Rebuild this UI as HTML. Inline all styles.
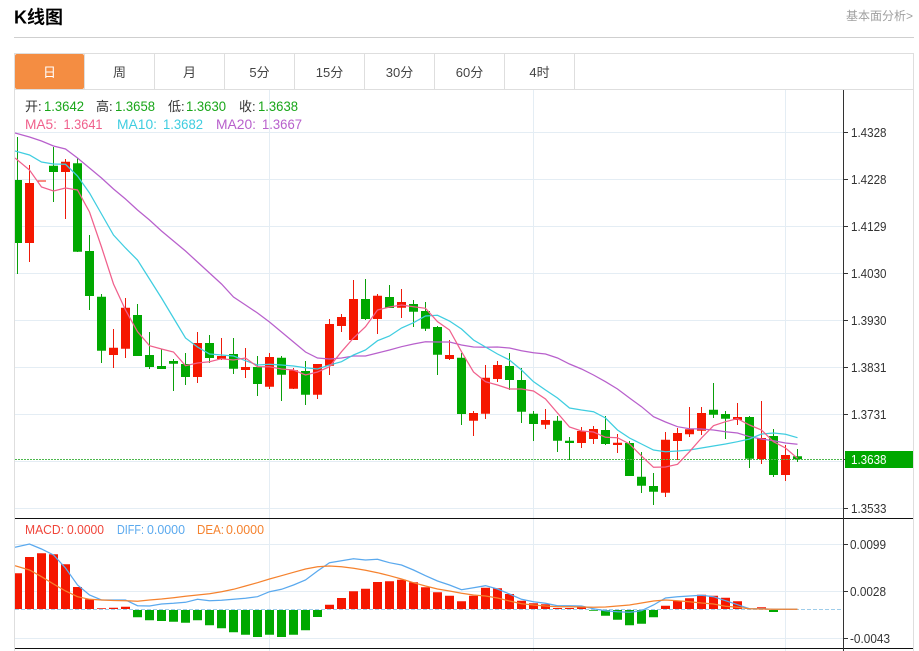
<!DOCTYPE html>
<html lang="zh">
<head>
<meta charset="utf-8">
<title>K线图</title>
<style>
html,body{margin:0;padding:0;background:#fff;width:919px;height:651px;overflow:hidden}
svg{display:block;position:absolute;left:0;top:0}
text{font-family:"Liberation Sans","Noto Sans CJK SC",sans-serif}
</style>
</head>
<body>
<svg width="919" height="651" viewBox="0 0 919 651" xmlns="http://www.w3.org/2000/svg">
<defs><clipPath id="c"><rect x="15" y="90" width="828" height="561"/></clipPath></defs>

<!-- header -->
<text x="14" y="23.5" font-size="18" font-weight="700" fill="#000">K线图</text>
<text x="846" y="20" font-size="12" fill="#a0a0a0">基本面分析&gt;</text>
<path d="M14 37.5H914" stroke="#cfcfcf" fill="none"/>

<!-- tabs / frame -->
<path d="M14.5 651V53.5H913.5V651M14.5 89.5H913.5M84.5 54V89M154.5 54V89M224.5 54V89M294.5 54V89M364.5 54V89M434.5 54V89M504.5 54V89M574.5 54V89" stroke="#dedede" fill="none"/>
<rect x="15" y="54" width="69" height="35" rx="2" fill="#f48d42"/>
<g font-size="13" fill="#444" text-anchor="middle">
<text x="49.5" y="77" fill="#fff">日</text>
<text x="119.5" y="77">周</text>
<text x="189.5" y="77">月</text>
<text x="259.5" y="77">5分</text>
<text x="329.5" y="77">15分</text>
<text x="399.5" y="77">30分</text>
<text x="469.5" y="77">60分</text>
<text x="539.5" y="77">4时</text>
</g>

<!-- grid -->
<path d="M15 132.5H843M15 179.5H843M15 226.5H843M15 273.5H843M15 320.5H843M15 367.5H843M15 414.5H843M15 461.5H843M15 508.5H843M15 544.5H843M15 591.5H843M15 638.5H843M269.5 90V651M533.5 90V651M785.5 90V651" stroke="#e4edf4" fill="none"/>

<g clip-path="url(#c)">
<!-- wicks -->
<path fill="none" stroke="#0a9f0a" d="M17.5 137V274M53.5 147V202M77.5 158V252M89.5 235V310M101.5 294V363M137.5 304V356M149.5 332V369M161.5 349V369M173.5 359V391M185.5 353V385M209.5 335V363M233.5 338V374M257.5 356V396M281.5 356V401M305.5 361V405M365.5 279V320M389.5 285V308M413.5 300V327M425.5 302V331M437.5 326V375M461.5 353V425M509.5 353V390M521.5 368V423M533.5 411V441M557.5 416V452M569.5 437V460M605.5 416V445M629.5 441V476M641.5 452V493M653.5 473V505M713.5 383V418M725.5 411V439M749.5 416V468M773.5 429V477M797.5 449V462"/>
<path fill="none" stroke="#ee1a0a" d="M29.5 165V262M65.5 159V219M113.5 329V368M125.5 298V358M197.5 332V383M221.5 338V360M245.5 348V378M269.5 353V389M293.5 368V389M317.5 364V399M329.5 319V375M341.5 314V332M353.5 280V340M377.5 294V334M401.5 289V318M449.5 340V360M473.5 411V436M485.5 365V419M497.5 361V382M545.5 409V429M581.5 427V448M593.5 426V444M617.5 434V453M665.5 432V497M677.5 428V460M689.5 407V437M701.5 407V435M737.5 403V425M761.5 401V464M785.5 445V481"/>
<!-- bodies -->
<path fill="#00a800" d="M13 180h9V243h-9zM49 165.7h9V172h-9zM73 163.3h9V251.7h-9zM85 251h9V296h-9zM97 296.7h9V350.7h-9zM133 315h9V356h-9zM145 355h9V367h-9zM157 366h9V369h-9zM169 361h9V363.7h-9zM181 364h9V377h-9zM205 343h9V358h-9zM229 354h9V368.7h-9zM253 367h9V384h-9zM277 357.7h9V374.7h-9zM301 371h9V394.7h-9zM361 299h9V319h-9zM385 297h9V308h-9zM409 304h9V311.7h-9zM421 311h9V328.7h-9zM433 327h9V354.7h-9zM457 357.7h9V414h-9zM505 366h9V380h-9zM517 380h9V411.7h-9zM529 413.7h9V424h-9zM553 420.7h9V440.7h-9zM565 440.7h9V443h-9zM601 430h9V444h-9zM625 443h9V476h-9zM637 476.7h9V485.7h-9zM649 486h9V491.7h-9zM709 409.7h9V414.7h-9zM721 414h9V418.7h-9zM745 417h9V458.7h-9zM769 436h9V475h-9zM793 456.3h9V459.3h-9z"/>
<path fill="#f51700" d="M25 183h9V243h-9zM37 180.5h9V181.5h-9zM61 161.7h9V172h-9zM109 347.7h9V355h-9zM121 307.7h9V348.7h-9zM193 343h9V377h-9zM217 356h9V359h-9zM241 367h9V370h-9zM265 357h9V386.7h-9zM289 370.3h9V388.7h-9zM313 364h9V394.7h-9zM325 324h9V365.7h-9zM337 317h9V326h-9zM349 299h9V340h-9zM373 295.7h9V319h-9zM397 302h9V307.7h-9zM445 355h9V359h-9zM469 413h9V420.7h-9zM481 377.7h9V413.7h-9zM493 365h9V379h-9zM541 420h9V424.7h-9zM577 431h9V443h-9zM589 429h9V439h-9zM613 442.7h9V445h-9zM661 439.7h9V492.7h-9zM673 433h9V441h-9zM685 429.3h9V434.3h-9zM697 413h9V430.7h-9zM733 417h9V420h-9zM757 438h9V459h-9zM781 455h9V475h-9z"/>

<!-- last-price dashed -->
<path d="M15 459.5H843" stroke="#4db84d" stroke-dasharray="2 1" fill="none"/>

<!-- MA20 -->
<polyline fill="none" stroke="#b860cc" stroke-width="1.25" points="15,133 29.5,137 41.5,141 53.5,146 65.5,149 77.5,158 89.5,168 101.5,178 113.5,189 125.5,199 137.5,210 149.5,220 161.5,231 173.5,241 185.5,251 197.5,262 209.5,273 221.5,284 233.5,297 245.5,305 257.5,313 269.5,322 281.5,332 293.5,342 305.5,352 317.5,358 329.5,359 341.5,358 353.5,356 365.5,356 377.5,353 389.5,350 401.5,346.7 413.5,344 425.5,341.7 437.5,342 449.5,342 461.5,345 473.5,347 485.5,347.3 497.5,347 509.5,348 521.5,350.7 533.5,352.7 545.5,354 557.5,358 569.5,364 581.5,369 593.5,375 605.5,381.7 617.5,389 629.5,398 641.5,406.7 653.5,416.7 665.5,422 677.5,426.7 689.5,428.7 701.5,429 713.5,430 725.5,431.7 737.5,433 749.5,436.7 761.5,439 773.5,440.7 785.5,443 797.5,444.3"/>
<!-- MA10 -->
<polyline fill="none" stroke="#3fcde0" stroke-width="1.25" points="15,151 29.5,155 41.5,162 53.5,164 65.5,164.3 77.5,176 89.5,193 101.5,214 113.5,235 125.5,248 137.5,260 149.5,279 161.5,298 173.5,318 185.5,338 197.5,347 209.5,354 221.5,355 233.5,356 245.5,360.7 257.5,365 269.5,364.3 281.5,365 293.5,366 305.5,367.7 317.5,369 329.5,365 341.5,361.7 353.5,355 365.5,350 377.5,340.7 389.5,336 401.5,328 413.5,322.7 425.5,316 437.5,315.3 449.5,321 461.5,329 473.5,340 485.5,347 497.5,354 509.5,360 521.5,370 533.5,381.7 545.5,390 557.5,398 569.5,408 581.5,410 593.5,411.7 605.5,418 617.5,430 629.5,438 641.5,444 653.5,450 665.5,451.7 677.5,451 689.5,450 701.5,448 713.5,446 725.5,444 737.5,441.7 749.5,439 761.5,434 773.5,433 785.5,434.3 797.5,437.7"/>
<!-- MA5 -->
<polyline fill="none" stroke="#f0608c" stroke-width="1.25" points="15,158 29.5,170 41.5,187 53.5,191 65.5,188 77.5,190 89.5,212 101.5,247 113.5,284 125.5,310 137.5,331.7 149.5,345.7 161.5,349 173.5,352 185.5,365.7 197.5,363 209.5,361.7 221.5,358.7 233.5,360 245.5,358 257.5,366.7 269.5,366.7 281.5,369 293.5,370 305.5,375 317.5,372 329.5,366.7 341.5,351.7 353.5,338 365.5,326.7 377.5,310 389.5,307 401.5,305 413.5,306.7 425.5,308.3 437.5,321.7 449.5,330 461.5,351.7 473.5,372 485.5,381.7 497.5,385 509.5,389 521.5,389 533.5,391 545.5,399 557.5,413 569.5,427 581.5,431 593.5,432 605.5,437.3 617.5,437.7 629.5,444 641.5,456 653.5,467.3 665.5,467 677.5,464.3 689.5,451.7 701.5,438 713.5,425.7 725.5,421.7 737.5,418.7 749.5,425 761.5,430 773.5,441.7 785.5,448 797.5,458.3"/>

<!-- MACD zero line -->
<path d="M15 609.5H841" stroke="#9fcdea" stroke-dasharray="4 2" fill="none"/>
<!-- MACD bars -->
<path fill="#f51700" d="M13 573.3h9V609h-9zM25 557h9V609h-9zM37 553.3h9V609h-9zM49 554.3h9V609h-9zM61 564.3h9V609h-9zM73 587h9V609h-9zM85 599.3h9V609h-9zM97 608.3h9V609h-9zM109 607.7h9V609h-9zM121 606.7h9V609h-9zM325 604.7h9V609h-9zM337 598h9V609h-9zM349 591.3h9V609h-9zM361 588.7h9V609h-9zM373 582h9V609h-9zM385 581.3h9V609h-9zM397 579.7h9V609h-9zM409 582.3h9V609h-9zM421 587.3h9V609h-9zM433 592.3h9V609h-9zM445 595.7h9V609h-9zM457 601.3h9V609h-9zM469 595.7h9V609h-9zM481 587.7h9V609h-9zM493 588.3h9V609h-9zM505 594h9V609h-9zM517 600.7h9V609h-9zM529 603.3h9V609h-9zM541 604.3h9V609h-9zM553 608h9V609h-9zM565 608h9V609h-9zM577 607.3h9V609h-9zM661 605.7h9V609h-9zM673 601h9V609h-9zM685 598.3h9V609h-9zM697 594.7h9V609h-9zM709 595.7h9V609h-9zM721 597.7h9V609h-9zM733 601.3h9V609h-9zM745 608.7h9V609h-9zM757 607.3h9V609h-9z"/>
<path fill="#00a800" d="M133 610h9V617.3h-9zM145 610h9V620.3h-9zM157 610h9V621h-9zM169 610h9V621.7h-9zM181 610h9V622.7h-9zM193 610h9V620.3h-9zM205 610h9V625.3h-9zM217 610h9V628.3h-9zM229 610h9V632.3h-9zM241 610h9V634.7h-9zM253 610h9V637h-9zM265 610h9V634.7h-9zM277 610h9V637h-9zM289 610h9V634.7h-9zM301 610h9V630.3h-9zM313 610h9V617h-9zM589 610h9V610.7h-9zM601 610h9V615.7h-9zM613 610h9V619.7h-9zM625 610h9V625.3h-9zM637 610h9V623.7h-9zM649 610h9V617.3h-9zM769 610h9V612h-9z"/>
<!-- DIFF -->
<polyline fill="none" stroke="#5aa9ee" stroke-width="1.25" points="15,547.3 29.5,544 41.5,549 53.5,555 65.5,568 77.5,585 89.5,595 101.5,600 113.5,600 125.5,600 137.5,605.7 149.5,606 161.5,604 173.5,603.3 185.5,602.3 197.5,599.3 209.5,600.7 221.5,600.3 233.5,599.3 245.5,598.3 257.5,596.7 269.5,591.7 281.5,589.3 293.5,585 305.5,580 317.5,571 329.5,562.7 341.5,560.7 353.5,558.7 365.5,560 377.5,559.3 389.5,562.7 401.5,565 413.5,570 425.5,575.7 437.5,581 449.5,585 461.5,589.7 473.5,587.7 485.5,585.7 497.5,589 509.5,594 521.5,599.3 533.5,601.7 545.5,603.3 557.5,605.7 569.5,605.7 581.5,606 593.5,608.7 605.5,610.7 617.5,611.7 629.5,612.3 641.5,610.7 653.5,605 665.5,598 677.5,596.7 689.5,596 701.5,595.3 713.5,596.7 725.5,600.7 737.5,604.7 749.5,608.7 761.5,608.7 773.5,609.3 797.5,609.3"/>
<!-- DEA -->
<polyline fill="none" stroke="#f5822e" stroke-width="1.25" points="15,565.7 29.5,570 41.5,576.7 53.5,584 65.5,591 77.5,596.7 89.5,599.3 101.5,600 113.5,600.5 125.5,600.7 137.5,601.3 149.5,600 161.5,599 173.5,597.7 185.5,596.3 197.5,595 209.5,593.7 221.5,591.7 233.5,589.3 245.5,586 257.5,582.7 269.5,579 281.5,575.7 293.5,572.3 305.5,569 317.5,566.7 329.5,566 341.5,566.7 353.5,568.3 365.5,570.3 377.5,572.7 389.5,575.7 401.5,579 413.5,582.7 425.5,586 437.5,589 449.5,591 461.5,593.3 473.5,595 485.5,596 497.5,598 509.5,601 521.5,603.7 533.5,605 545.5,606 557.5,606.7 569.5,606.7 581.5,607 593.5,607.3 605.5,607 617.5,606 629.5,605 641.5,603 653.5,601 665.5,600 677.5,600.7 689.5,601.7 701.5,603 713.5,604 725.5,606.3 737.5,607.3 749.5,608.7 761.5,609 773.5,609.3 797.5,609.3"/>
</g>

<!-- panel divider lines -->
<path d="M15 518.5H913M15 648.5H913" stroke="#111" fill="none"/>

<!-- axis -->
<path d="M843.5 90V651M843 132.5H848M843 179.5H848M843 226.5H848M843 273.5H848M843 320.5H848M843 367.5H848M843 414.5H848M843 459.5H848M843 508.5H848M843 544.5H848M843 591.5H848M843 638.5H848" stroke="#333" fill="none"/>
<rect x="845" y="451" width="68" height="17" fill="#00a800"/>
<g font-size="13" fill="#333">
<text x="851" y="137" textLength="35.5" lengthAdjust="spacingAndGlyphs">1.4328</text>
<text x="851" y="184" textLength="35.5" lengthAdjust="spacingAndGlyphs">1.4228</text>
<text x="851" y="231" textLength="35.5" lengthAdjust="spacingAndGlyphs">1.4129</text>
<text x="851" y="278" textLength="35.5" lengthAdjust="spacingAndGlyphs">1.4030</text>
<text x="851" y="325" textLength="35.5" lengthAdjust="spacingAndGlyphs">1.3930</text>
<text x="851" y="372" textLength="35.5" lengthAdjust="spacingAndGlyphs">1.3831</text>
<text x="851" y="419" textLength="35.5" lengthAdjust="spacingAndGlyphs">1.3731</text>
<text x="851" y="464" textLength="35.5" lengthAdjust="spacingAndGlyphs" fill="#fff">1.3638</text>
<text x="851" y="513" textLength="35.5" lengthAdjust="spacingAndGlyphs">1.3533</text>
<text x="850" y="549" textLength="36" lengthAdjust="spacingAndGlyphs">0.0099</text>
<text x="850" y="596" textLength="36" lengthAdjust="spacingAndGlyphs">0.0028</text>
<text x="850" y="643" textLength="40" lengthAdjust="spacingAndGlyphs">-0.0043</text>
</g>

<!-- legends -->
<g font-size="14">
<g fill="#333">
<text x="25" y="111" font-size="13">开:</text>
<text x="96" y="111" font-size="13">高:</text>
<text x="168" y="111" font-size="13">低:</text>
<text x="239" y="111" font-size="13">收:</text>
</g>
<g fill="#19a619">
<text x="44" y="111" textLength="40" lengthAdjust="spacingAndGlyphs">1.3642</text>
<text x="115" y="111" textLength="40" lengthAdjust="spacingAndGlyphs">1.3658</text>
<text x="186" y="111" textLength="40" lengthAdjust="spacingAndGlyphs">1.3630</text>
<text x="258" y="111" textLength="40" lengthAdjust="spacingAndGlyphs">1.3638</text>
</g>
<g fill="#f0608c">
<text x="25" y="129" textLength="32" lengthAdjust="spacingAndGlyphs">MA5:</text>
<text x="63.5" y="129" textLength="39" lengthAdjust="spacingAndGlyphs">1.3641</text>
</g>
<g fill="#3fcde0">
<text x="117" y="129" textLength="40" lengthAdjust="spacingAndGlyphs">MA10:</text>
<text x="163" y="129" textLength="40" lengthAdjust="spacingAndGlyphs">1.3682</text>
</g>
<g fill="#b860cc">
<text x="216" y="129" textLength="40" lengthAdjust="spacingAndGlyphs">MA20:</text>
<text x="262" y="129" textLength="40" lengthAdjust="spacingAndGlyphs">1.3667</text>
</g>
</g>
<g font-size="13">
<g fill="#f0453a">
<text x="25" y="534" textLength="39" lengthAdjust="spacingAndGlyphs">MACD:</text>
<text x="67" y="534" textLength="37" lengthAdjust="spacingAndGlyphs">0.0000</text>
</g>
<g fill="#5aa9ee">
<text x="117" y="534" textLength="27" lengthAdjust="spacingAndGlyphs">DIFF:</text>
<text x="147" y="534" textLength="38" lengthAdjust="spacingAndGlyphs">0.0000</text>
</g>
<g fill="#f5822e">
<text x="197" y="534" textLength="27" lengthAdjust="spacingAndGlyphs">DEA:</text>
<text x="226" y="534" textLength="38" lengthAdjust="spacingAndGlyphs">0.0000</text>
</g>
</g>
</svg>
</body>
</html>
